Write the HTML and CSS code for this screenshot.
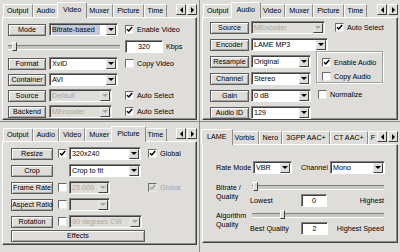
FILE: index.html
```html
<!DOCTYPE html>
<html lang="en">
<head>
  <meta charset="UTF-8">
  <title>Encoder Settings</title>
  <link rel="stylesheet" href="styles.css">
</head>
<body>
  <div class="screen">

    <!-- Video tab -->
    <section class="panel">
      <div class="tabs">
        <span class="tab">Output</span>
        <span class="tab">Audio</span>
        <span class="tab on">Video</span>
        <span class="tab">Muxer</span>
        <span class="tab">Picture</span>
        <span class="tab">Time</span>
        <span class="spin"><i class="lt"></i><i class="rt"></i></span>
      </div>
      <div class="page video">
        <span class="btn w38">Mode</span>
        <span class="sel hl w69"><span class="val">Bitrate-based</span><i class="dd"></i></span>
        <span class="cb"><i class="box"><svg viewBox="0 0 7 7"><path d="M1 3.2l1.8 1.8 3.4-4"/></svg></i>Enable Video</span>

        <span class="slider span2"><i class="thumb" style="left:4px"></i></span>
        <span class="unit"><span class="edit w38">320</span>Kbps</span>

        <span class="btn w38">Format</span>
        <span class="sel w69"><span class="val">XviD</span><i class="dd"></i></span>
        <span class="cb"><i class="box"></i>Copy Video</span>

        <span class="btn w38">Container</span>
        <span class="sel w69"><span class="val">AVI</span><i class="dd"></i></span>
        <span></span>

        <span class="btn w38">Source</span>
        <span class="sel dis w63"><span class="val">Default</span><i class="dd"></i></span>
        <span class="cb"><i class="box"><svg viewBox="0 0 7 7"><path d="M1 3.2l1.8 1.8 3.4-4"/></svg></i>Auto Select</span>

        <span class="btn w38">Backend</span>
        <span class="sel dis w63"><span class="val">MEncoder</span><i class="dd"></i></span>
        <span class="cb"><i class="box"><svg viewBox="0 0 7 7"><path d="M1 3.2l1.8 1.8 3.4-4"/></svg></i>Auto Select</span>
      </div>
    </section>

    <!-- Audio tab -->
    <section class="panel">
      <div class="tabs">
        <span class="tab">Output</span>
        <span class="tab on">Audio</span>
        <span class="tab">Video</span>
        <span class="tab">Muxer</span>
        <span class="tab">Picture</span>
        <span class="tab">Time</span>
        <span class="spin"><i class="lt"></i><i class="rt"></i></span>
      </div>
      <div class="page audio">
        <div class="row">
          <span class="btn w39">Source</span>
          <span class="sel dis w74"><span class="val">MEncoder</span><i class="dd"></i></span>
          <span class="cb gap8"><i class="box"><svg viewBox="0 0 7 7"><path d="M1 3.2l1.8 1.8 3.4-4"/></svg></i>Auto Select</span>
        </div>
        <div class="row">
          <span class="btn w39">Encoder</span>
          <span class="sel w77"><span class="val">LAME MP3</span><i class="dd"></i></span>
        </div>
        <div class="cols">
          <div>
            <div class="row">
              <span class="btn w39">Resample</span>
              <span class="sel w60"><span class="val">Original</span><i class="dd"></i></span>
            </div>
            <div class="row">
              <span class="btn w39">Channel</span>
              <span class="sel w60"><span class="val">Stereo</span><i class="dd"></i></span>
            </div>
            <div class="row">
              <span class="btn w39">Gain</span>
              <span class="sel w60"><span class="val">0 dB</span><i class="dd"></i></span>
            </div>
            <div class="row">
              <span class="btn w39">Audio ID</span>
              <span class="sel w60"><span class="val">129</span><i class="dd"></i></span>
            </div>
          </div>
          <div class="side">
            <div class="group">
              <span class="cb"><i class="box"><svg viewBox="0 0 7 7"><path d="M1 3.2l1.8 1.8 3.4-4"/></svg></i>Enable Audio</span>
              <span class="cb"><i class="box"></i>Copy Audio</span>
            </div>
            <span class="cb norm"><i class="box"></i>Normalize</span>
          </div>
        </div>
      </div>
    </section>

    <!-- Picture tab -->
    <section class="panel">
      <div class="tabs low">
        <span class="tab">Output</span>
        <span class="tab">Audio</span>
        <span class="tab">Video</span>
        <span class="tab">Muxer</span>
        <span class="tab on">Picture</span>
        <span class="tab">Time</span>
        <span class="spin"><i class="lt"></i><i class="rt"></i></span>
      </div>
      <div class="page pic">
        <span class="btn w42">Resize</span>
        <i class="box"><svg viewBox="0 0 7 7"><path d="M1 3.2l1.8 1.8 3.4-4"/></svg></i>
        <span class="sel w72"><span class="val">320x240</span><i class="dd"></i></span>
        <span class="cb"><i class="box"><svg viewBox="0 0 7 7"><path d="M1 3.2l1.8 1.8 3.4-4"/></svg></i>Global</span>

        <span class="btn w42">Crop</span>
        <span></span>
        <span class="sel w72"><span class="val">Crop to fit</span><i class="dd"></i></span>
        <span></span>

        <span class="btn w42">Frame Rate</span>
        <i class="box"></i>
        <span class="sel dis w41"><span class="val">25.000</span><i class="dd"></i></span>
        <span class="cb dis"><i class="box"><svg viewBox="0 0 7 7"><path d="M1 3.2l1.8 1.8 3.4-4"/></svg></i>Global</span>

        <span class="btn w42">Aspect Ratio</span>
        <i class="box"></i>
        <span class="sel dis w41"><span class="val"></span><i class="dd"></i></span>
        <span></span>

        <span class="btn w42">Rotation</span>
        <i class="box"></i>
        <span class="sel dis w73"><span class="val">90 degrees CW</span><i class="dd"></i></span>
        <span></span>

        <span class="btn effects">Effects</span>
      </div>
    </section>

    <!-- LAME encoder tab -->
    <section class="panel">
      <div class="tabs lower">
        <span class="tab on">LAME</span>
        <span class="tab">Vorbis</span>
        <span class="tab">Nero</span>
        <span class="tab">3GPP AAC+</span>
        <span class="tab">CT AAC+</span>
        <span class="tab cut">F</span>
        <span class="spin"><i class="lt"></i><i class="rt"></i></span>
      </div>
      <div class="page lame">
        <div class="lrow">
          <span class="lbl w37">Rate Mode</span>
          <span class="sel w39"><span class="val">VBR</span><i class="dd"></i></span>
          <span class="lbl w29 gap9">Channel</span>
          <span class="sel w55"><span class="val">Mono</span><i class="dd"></i></span>
        </div>
        <div class="sblock">
          <span class="slbl">Bitrate /<br>Quality</span>
          <div>
            <span class="slider"><i class="thumb" style="left:1px"></i></span>
            <div class="vals">
              <span>Lowest</span>
              <span class="edit w26">0</span>
              <span class="end">Highest</span>
            </div>
          </div>
        </div>
        <div class="sblock">
          <span class="slbl">Algorithm<br>Quality</span>
          <div>
            <span class="slider"><i class="thumb" style="left:28px"></i></span>
            <div class="vals">
              <span>Best Quality</span>
              <span class="edit w27">2</span>
              <span class="end">Highest Speed</span>
            </div>
          </div>
        </div>
      </div>
    </section>

  </div>
</body>
</html>
```

FILE: styles.css
```css
/* Classic settings dialog, four tab pages */
* { box-sizing: border-box; }
body { margin: 0; background: #8c8c8c; font-family: "Liberation Sans", Arial, sans-serif; font-size: 7.2px; color: #000; }
.screen { display: grid; grid-template-columns: 199px 200px; grid-template-rows: 121px 130px; gap: 1px; width: 400px; height: 252px; }
.panel { background: #dfddd9; display: flex; flex-direction: column; overflow: hidden; }

/* tab strip */
.tabs { position: relative; display: flex; align-items: flex-end; flex: none; height: 17px; padding: 0 3px; }
.tabs.low { height: 19px; }
.tabs.lower { height: 22px; }
.tab { flex: none; height: 13px; line-height: 12px; padding: 0 3px; border: 1px solid #8c8c8c; border-bottom: 0; border-top-color: #fff; border-left-color: #fff; border-radius: 1px 1px 0 0; white-space: nowrap; }
.tab.on { position: relative; z-index: 1; height: 16px; line-height: 14px; margin: 0 -2px -1px; padding: 0 5px; background: #dfddd9; }
.tab.cut { padding: 0 2px; border-right: 0; }
.spin { position: absolute; right: 2px; bottom: 2px; display: flex; gap: 1px; background: #dfddd9; padding-left: 1px; }
.spin i { width: 10px; height: 11px; border: 1px solid; border-color: #fff #404040 #404040 #fff; background: #dfddd9; display: flex; align-items: center; justify-content: center; }
.spin .lt::after { content: ""; border: 3px solid transparent; border-right: 3px solid #000; border-left: 0; }
.spin .rt::after { content: ""; border: 3px solid transparent; border-left: 3px solid #000; border-right: 0; }

.page { flex: none; margin: 0 2px; border: 1px solid; border-color: #fff #404040 #404040 #fff; box-shadow: inset -1px -1px #8c8c8c; }

/* controls */
.btn { height: 12px; line-height: 10px; text-align: center; white-space: nowrap; border: 1px solid #5c5c5c; box-shadow: inset 1px 1px #fff, inset -1px -1px #a8a8a8; }
.sel { display: flex; align-items: center; height: 13px; background: #fff; border: 1px solid; border-color: #808080 #fff #fff #808080; box-shadow: inset 1px 1px #404040; padding: 1px 1px 0 2px; }
.sel .val { flex: 1; white-space: nowrap; overflow: hidden; line-height: 10px; }
.sel.hl .val { background: #c4c9d9; margin-right: 6px; }
.sel.dis { background: #dfddd9; color: #a6a6a6; }
.dd { flex: none; width: 10px; height: 10px; margin-top: -1px; border: 1px solid; border-color: #e8e8e8 #404040 #404040 #e8e8e8; background: #dfddd9; display: flex; align-items: center; justify-content: center; }
.dd::after { content: ""; border: 3px solid transparent; border-top: 3px solid #000; border-bottom: 0; }
.sel.dis .dd::after { border-top-color: #a6a6a6; }
.edit { height: 13px; line-height: 11px; text-align: center; background: #fff; border: 1px solid; border-color: #808080 #fff #fff #808080; box-shadow: inset 1px 1px #404040; }
.cb { display: flex; align-items: center; gap: 3px; white-space: nowrap; }
.cb.dis { color: #a6a6a6; }
.box { flex: none; display: block; width: 9px; height: 9px; background: #fff; border: 1px solid; border-color: #6c6c6c #e8e8e8 #e8e8e8 #6c6c6c; }
.box svg { display: block; width: 7px; height: 7px; fill: none; stroke: #000; stroke-width: 1.5; }
.cb.dis .box { background: #dfddd9; }
.cb.dis .box svg { stroke: #a6a6a6; }
.slider { position: relative; display: block; height: 9px; }
.slider::before { content: ""; position: absolute; left: 0; right: 0; top: 3px; height: 3px; border-top: 1px solid #808080; border-bottom: 1px solid #fff; background: #c8c6c2; }
.thumb { position: absolute; top: 0; width: 5px; height: 9px; background: #dfddd9; border: 1px solid; border-color: #fff #404040 #404040 #fff; }

.w26 { width: 26px; } .w27 { width: 27px; } .w29 { width: 29px; } .w37 { width: 37px; }
.w38 { width: 38px; } .w39 { width: 39px; } .w41 { width: 41px; } .w42 { width: 42px; }
.w55 { width: 55px; } .w60 { width: 60px; } .w63 { width: 63px; } .w69 { width: 69px; }
.w72 { width: 72px; } .w73 { width: 73px; } .w74 { width: 74px; } .w77 { width: 77px; }
.gap8 { margin-left: 8px; } .gap9 { margin-left: 9px; }

/* video page */
.video { height: 103px; padding: 5px 0 0 5px; display: grid; grid-template-columns: 41px 76px auto; grid-template-rows: 13px 15px 13px 13px 13px 13px; row-gap: 3px; align-items: center; }
.video .span2 { grid-column: 1 / 3; width: 112px; height: 10px; }
.unit { display: flex; align-items: center; gap: 3px; }

/* audio page */
.audio { height: 103px; padding: 3px 0 0 7px; }
.row { display: flex; align-items: center; gap: 2px; height: 13px; margin-bottom: 4px; }
.cols { display: flex; }
.side { margin-left: 5px; }
.group { width: 67px; height: 32px; margin-top: -4px; padding: 6px 0 0 5px; display: flex; flex-direction: column; gap: 5px; border: 1px solid #a0a0a0; box-shadow: inset 1px 1px #fff, 1px 1px #fff; }
.norm { margin: 7px 0 0 2px; }

/* picture page */
.pic { height: 104px; padding: 5px 0 0 8px; display: grid; grid-template-columns: 47px 11px 79px auto; grid-template-rows: repeat(5, 13px) 12px; row-gap: 4px; align-items: center; }
.effects { grid-column: 1 / 4; width: 134px; margin-top: -4px; }

/* lame page */
.lame { height: 99px; padding: 16px 0 0 13px; }
.lrow { display: flex; align-items: center; height: 13px; }
.lbl { white-space: nowrap; }
.sblock { display: grid; grid-template-columns: 36px 132px; margin-top: 8px; }
.sblock + .sblock { margin-top: 3px; }
.slbl { line-height: 9px; padding-top: 1px; }
.vals { display: grid; grid-template-columns: 51px auto 1fr; align-items: center; height: 13px; margin: 3px 0 0 -2px; }
.vals .end { text-align: right; }
```
